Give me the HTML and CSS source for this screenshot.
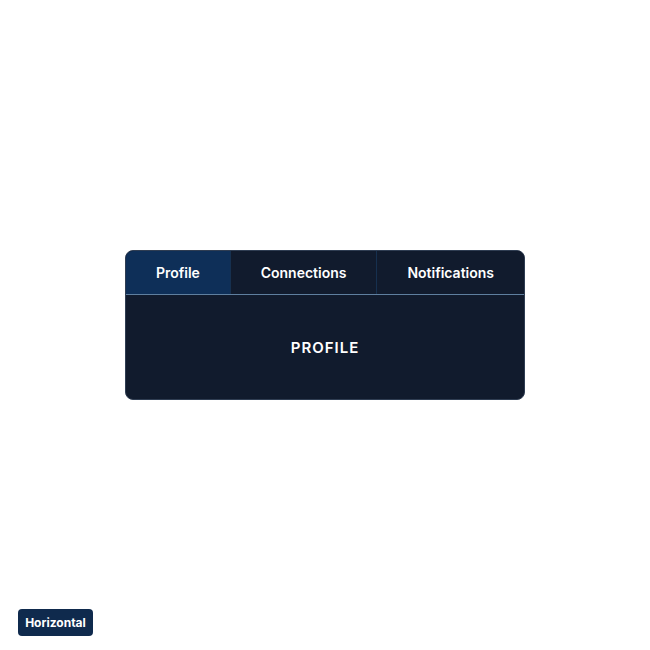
FILE: index.html
```html
<!DOCTYPE html>
<html>
<head>
<meta charset="utf-8">
<link rel="stylesheet" href="styles.css">
</head>
<body>
<main class="stage">
  <section class="tabs-card">
    <nav class="tab-bar">
      <button class="tab tab-active">Profile</button>
      <button class="tab">Connections</button>
      <button class="tab tab-last">Notifications</button>
    </nav>
    <div class="tab-panel">PROFILE</div>
  </section>
</main>
<button class="orientation-toggle">Horizontal</button>
</body>
</html>
```

FILE: styles.css
```css
* { box-sizing: border-box; }
html, body {
  margin: 0;
  padding: 0;
  background: #ffffff;
  font-family: Inter, "Noto Sans", sans-serif;
}
.stage {
  width: 650px;
  height: 650px;
  display: flex;
  align-items: center;
  justify-content: center;
}
.tabs-card {
  width: 400px;
  height: 150px;
  background: #111b2d;
  border: 1px solid #2f3d52;
  border-radius: 8px;
  overflow: hidden;
  display: flex;
  flex-direction: column;
}
.tab-bar {
  display: flex;
  height: 44px;
  border-bottom: 1px solid #5f7f9f;
}
.tab {
  flex: 1 1 auto;
  padding: 0 16px;
  border: 0;
  border-right: 1px solid #16304f;
  background: #111b2d;
  color: #ffffff;
  font-family: Inter, "Noto Sans", sans-serif;
  font-weight: 600;
  font-size: 14px;
  cursor: pointer;
}
.tab-last { border-right: 0; }
.tab-active { background: #0e2f58; }
.tab-panel {
  flex: 1;
  display: flex;
  align-items: center;
  justify-content: center;
  color: #ffffff;
  font-size: 15px;
  font-weight: 600;
  letter-spacing: 1px;
}
.orientation-toggle {
  position: fixed;
  left: 18px;
  top: 609px;
  width: 75px;
  height: 27px;
  padding: 0;
  border: 0;
  border-radius: 4px;
  background: #0f2a4d;
  color: #ffffff;
  font-family: Inter, "Noto Sans", sans-serif;
  font-size: 12px;
  font-weight: 700;
}
```
